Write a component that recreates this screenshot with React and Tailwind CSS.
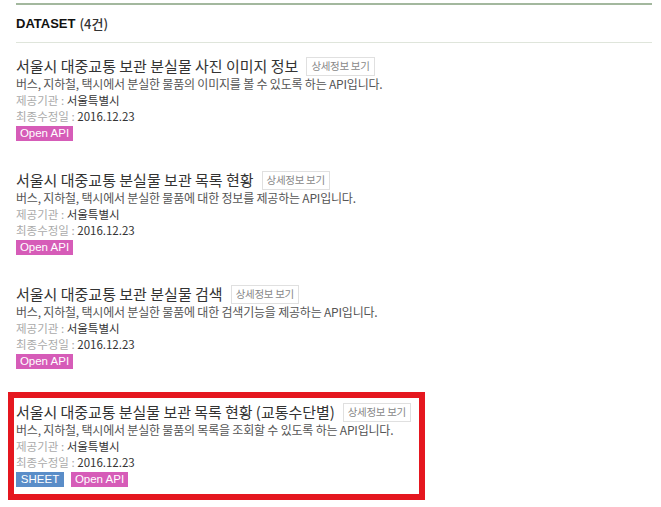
const items = [
  {
    title: "서울시 대중교통 보관 분실물 사진 이미지 정보",
    desc: "버스, 지하철, 택시에서 분실한 물품의 이미지를 볼 수 있도록 하는 API입니다.",
    sheet: false,
  },
  {
    title: "서울시 대중교통 분실물 보관 목록 현황",
    desc: "버스, 지하철, 택시에서 분실한 물품에 대한 정보를 제공하는 API입니다.",
    sheet: false,
  },
  {
    title: "서울시 대중교통 보관 분실물 검색",
    desc: "버스, 지하철, 택시에서 분실한 물품에 대한 검색기능을 제공하는 API입니다.",
    sheet: false,
  },
  {
    title: "서울시 대중교통 분실물 보관 목록 현황 (교통수단별)",
    desc: "버스, 지하철, 택시에서 분실한 물품의 목록을 조회할 수 있도록 하는 API입니다.",
    sheet: true,
    tight: true,
  },
];

function Item({ item }) {
  return (
    <div>
      <div className="flex h-[20px] items-center gap-[8px] whitespace-nowrap">
        <span className={item.tight ? "text-[15px] text-[#333] tracking-[-0.05px]" : "text-[15px] text-[#333]"}>
          {item.title}
        </span>
        <span className="flex h-[19px] shrink-0 items-center border border-[#e0e0e0] px-[4px] text-[10.5px] text-[#888] tracking-[-0.3px]">
          상세정보 보기
        </span>
      </div>
      <div className="h-[16px] whitespace-nowrap text-[12px] leading-[16px] text-[#555] tracking-[-0.2px]">{item.desc}</div>
      <div className="h-[16px] text-[11.5px] leading-[16px]">
        <span className="text-[#aaa]">제공기관 : </span>
        <span className="text-[#333]">서울특별시</span>
      </div>
      <div className="h-[16px] text-[11.5px] leading-[16px]">
        <span className="text-[#aaa]">최종수정일 : </span>
        <span className="text-[#333]">2016.12.23</span>
      </div>
      <div
        className="mt-[2px] flex gap-[7px]"
        style={{ fontFamily: '"Liberation Sans", sans-serif' }}
      >
        {item.sheet && (
          <span className="flex h-[15px] w-[48px] items-center justify-center bg-[#5a8dc8] text-[11.5px] text-white">
            SHEET
          </span>
        )}
        <span className="flex h-[15px] w-[57px] items-center justify-center bg-[#d65cb8] text-[11.5px] text-white">
          Open API
        </span>
      </div>
    </div>
  );
}

export default function App() {
  return (
    <div
      className="h-[507px] w-[661px] bg-white pl-[16px] pr-[9px] pt-[3px]"
      style={{ fontFamily: '"Noto Sans CJK KR", "Liberation Sans", sans-serif' }}
    >
      <div className="border-t-2 border-[#a3b89e]" />
      <div className="flex h-[38px] items-center gap-[4px] border-b border-[#dfe5db]">
        <span className="text-[13px] font-bold text-[#111]" style={{ fontFamily: '"Liberation Sans", sans-serif' }}>
          DATASET
        </span>
        <span className="text-[13px] font-medium text-[#333]">(4건)</span>
      </div>
      <div className="flex flex-col gap-[29px] pt-[13px]">
        {items.slice(0, 3).map((it, i) => (
          <Item key={i} item={it} />
        ))}
      </div>
      <div className="ml-[-8px] mt-[23px] w-[417px] border-[6px] border-[#e5171f] pb-[7px] pl-[2px] pt-[4px]">
        <Item item={items[3]} />
      </div>
    </div>
  );
}
